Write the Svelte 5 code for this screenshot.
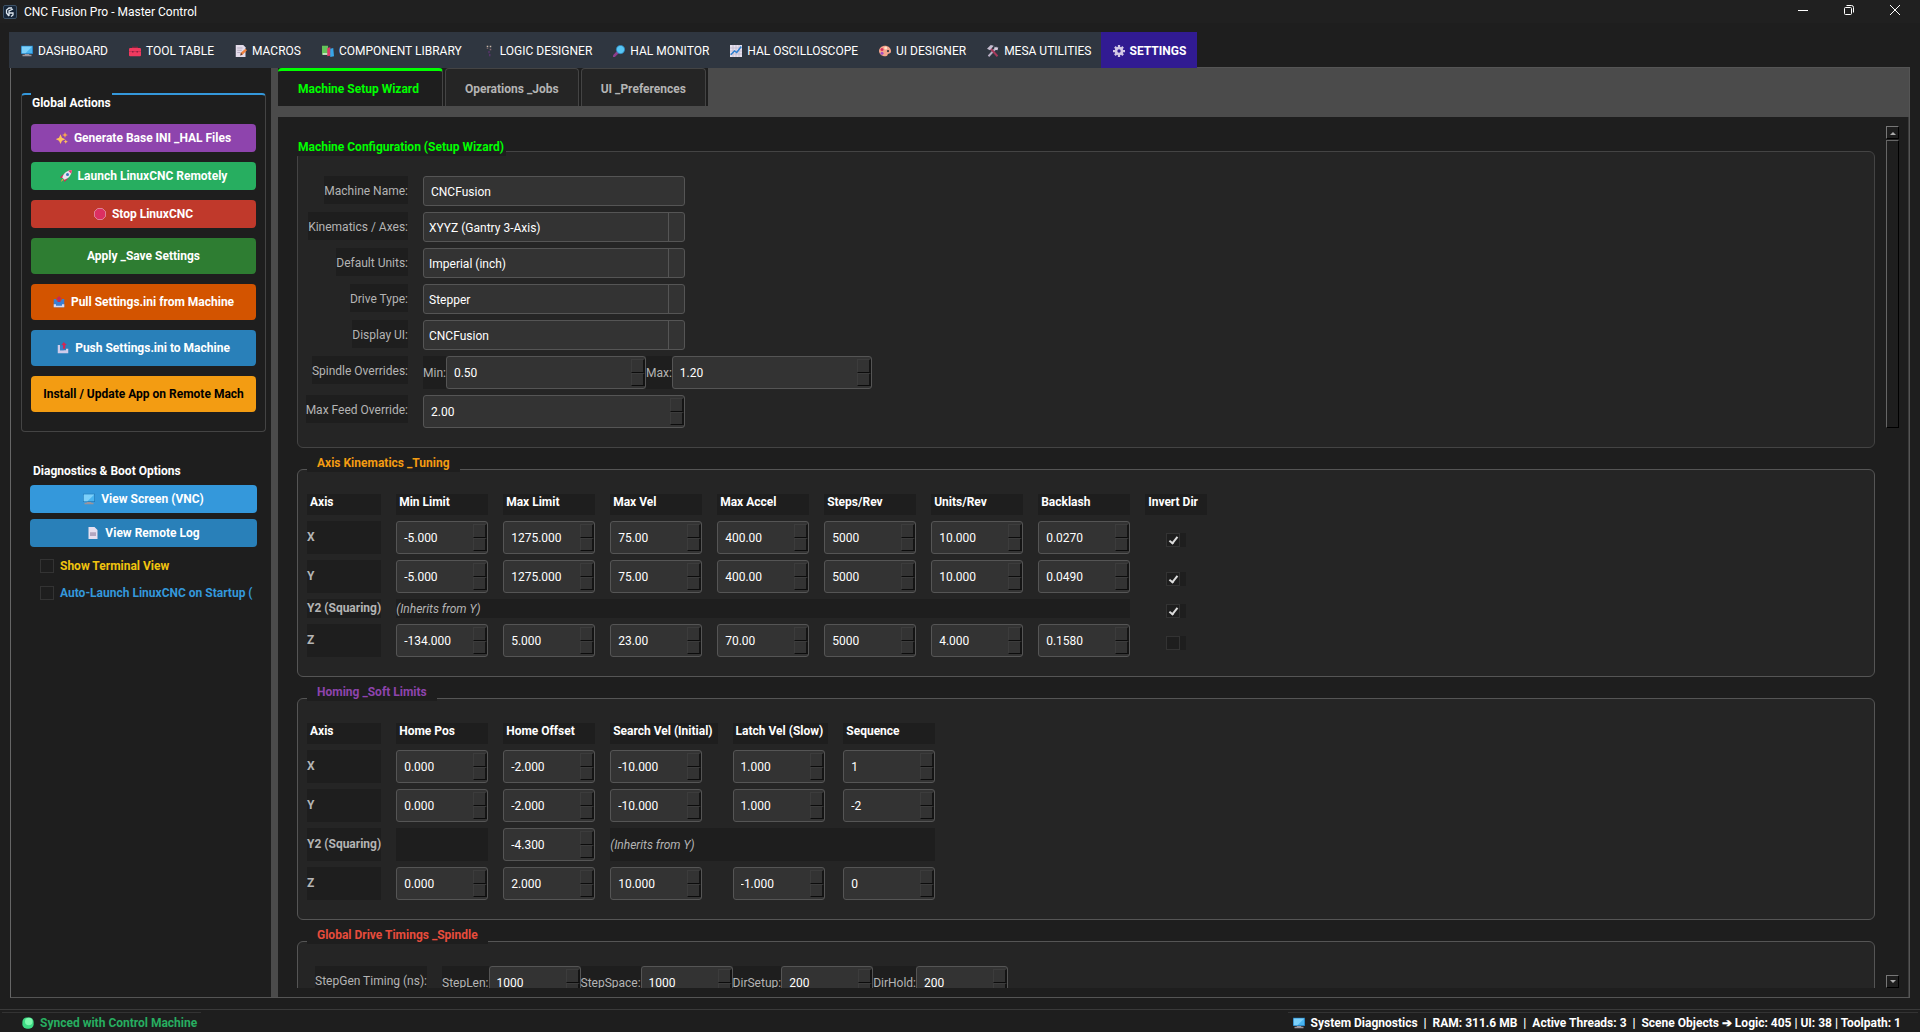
<script lang="ts">
  type Cell = string | null;
  type AxisRow = { axis: string; values: Cell[]; inherits?: number; invert?: boolean };

  const navItems = [
    { icon: 'monitor', label: 'DASHBOARD' },
    { icon: 'toolbox', label: 'TOOL TABLE' },
    { icon: 'memo', label: 'MACROS' },
    { icon: 'books', label: 'COMPONENT LIBRARY' },
    { icon: 'logic', label: 'LOGIC DESIGNER' },
    { icon: 'magnifier', label: 'HAL MONITOR' },
    { icon: 'chart', label: 'HAL OSCILLOSCOPE' },
    { icon: 'palette', label: 'UI DESIGNER' },
    { icon: 'tools', label: 'MESA UTILITIES' },
    { icon: 'gear', label: 'SETTINGS' }
  ];

  const pageTabs = ['Machine Setup Wizard', 'Operations _Jobs', 'UI _Preferences'];

  const actions = [
    { icon: 'sparkles', label: 'Generate Base INI _HAL Files', tone: 'purple' },
    { icon: 'rocket', label: 'Launch LinuxCNC Remotely', tone: 'green' },
    { icon: 'stop', label: 'Stop LinuxCNC', tone: 'red' },
    { icon: '', label: 'Apply _Save Settings', tone: 'forest tall' },
    { icon: 'inbox', label: 'Pull Settings.ini from Machine', tone: 'orange tall' },
    { icon: 'outbox', label: 'Push Settings.ini to Machine', tone: 'blue tall' },
    { icon: '', label: 'Install / Update App on Remote Mach', tone: 'amber tall' }
  ];

  const selects = [
    { id: 'kinematics', label: 'Kinematics / Axes:', value: 'XYYZ (Gantry 3-Axis)' },
    { id: 'units', label: 'Default Units:', value: 'Imperial (inch)' },
    { id: 'drive', label: 'Drive Type:', value: 'Stepper' },
    { id: 'display', label: 'Display UI:', value: 'CNCFusion' }
  ];

  const tuningHeads = ['Min Limit', 'Max Limit', 'Max Vel', 'Max Accel', 'Steps/Rev', 'Units/Rev', 'Backlash'];
  const tuningRows: AxisRow[] = [
    { axis: 'X', values: ['-5.000', '1275.000', '75.00', '400.00', '5000', '10.000', '0.0270'], invert: true },
    { axis: 'Y', values: ['-5.000', '1275.000', '75.00', '400.00', '5000', '10.000', '0.0490'], invert: true },
    { axis: 'Y2 (Squaring)', values: [], inherits: 7, invert: true },
    { axis: 'Z', values: ['-134.000', '5.000', '23.00', '70.00', '5000', '4.000', '0.1580'], invert: false }
  ];

  const homingHeads = ['Home Pos', 'Home Offset', 'Search Vel (Initial)', 'Latch Vel (Slow)', 'Sequence'];
  const homingRows: AxisRow[] = [
    { axis: 'X', values: ['0.000', '-2.000', '-10.000', '1.000', '1'] },
    { axis: 'Y', values: ['0.000', '-2.000', '-10.000', '1.000', '-2'] },
    { axis: 'Y2 (Squaring)', values: [null, '-4.300'], inherits: 3 },
    { axis: 'Z', values: ['0.000', '2.000', '10.000', '-1.000', '0'] }
  ];

  const timings = [
    { id: 'steplen', label: 'StepLen:', value: '1000' },
    { id: 'stepspace', label: 'StepSpace:', value: '1000' },
    { id: 'dirsetup', label: 'DirSetup:', value: '200' },
    { id: 'dirhold', label: 'DirHold:', value: '200' }
  ];

  let activeNav = $state('SETTINGS');
  let activeTab = $state('Machine Setup Wizard');
</script>

{#snippet icon(name: string)}
  <svg class="icon" viewBox="0 0 16 16" aria-hidden="true">
    {#if name === 'monitor'}
      <rect x="0" y="1" width="16" height="11" fill="#2277b5" />
      <path d="M1 2h14v9H1z" fill="#48b4f0" />
      <path d="M1 2h14L6 11H1z" fill="#7cd0fa" />
      <path d="M5 12h6v1h3v2H2v-2h3z" fill="#9a949c" />
    {:else if name === 'toolbox'}
      <path d="M5 5V3h6v2" fill="none" stroke="#9c1f3c" stroke-width="1.5" />
      <rect x="0" y="4" width="16" height="11" rx="1.5" fill="#f03a5f" />
      <rect x="0" y="8" width="16" height="1" fill="#c22c50" />
      <path d="M4 8h2v2H4zM10 8h2v2h-2z" fill="#8d2142" />
    {:else if name === 'memo'}
      <path d="M1 0h10l3 3v13H1z" fill="#e4dcea" />
      <path d="M3 4h7M3 7h6M3 10h4" stroke="#a79bb3" />
      <path d="M7 14l1-4 6-5 2 2-6 6z" fill="#f0803c" />
      <path d="M7 14l1-4 2 3z" fill="#59413c" />
    {:else if name === 'books'}
      <path d="M0 1h8v12H0z" fill="#63c45a" />
      <path d="M7 4l4-1 1 11-5 1z" fill="#e03a68" />
      <path d="M11 5l4-1 1 11-5 1z" fill="#38a7e8" />
      <path d="M1 11h6v2H1z" fill="#dff0dd" />
    {:else if name === 'logic'}
      <path d="M5 1h2v2H5zM9 1h2v2H9z" fill="#c9b8a8" />
      <path d="M5 4h2v1H5zM9 5h2v2H9z" fill="#8a6e72" />
      <path d="M7 8h2v3H7zM8 12h2v3H8z" fill="#563468" />
    {:else if name === 'magnifier'}
      <path d="M6 10L1 15" stroke="#8d3f8d" stroke-width="3.5" stroke-linecap="round" />
      <circle cx="10" cy="6" r="5.5" fill="#58c6f5" stroke="#2b86be" />
    {:else if name === 'chart'}
      <rect x="0" y="0" width="16" height="16" fill="#e6e1ee" />
      <path d="M4 0v16M8 0v16M12 0v16M0 4h16M0 8h16M0 12h16" stroke="#bdb4ca" />
      <path d="M1 13l5-5 3 2 6-8" fill="none" stroke="#2e7fd0" stroke-width="2" />
    {:else if name === 'palette'}
      <path d="M8 1c4 0 8 3 8 7s-3 3-4 4 0 3-4 3-8-3-8-7 4-7 8-7z" fill="#f4a58c" />
      <circle cx="4" cy="6" r="2" fill="#d92f5f" />
      <circle cx="9" cy="4" r="2" fill="#ffe3c7" />
      <circle cx="4" cy="11" r="2" fill="#a14cc2" />
      <circle cx="12" cy="8" r="1.5" fill="#2f3640" />
    {:else if name === 'tools'}
      <path d="M2 15L13 3" stroke="#b9aec4" stroke-width="2.5" />
      <path d="M10 2l2 2 3-1-1 4-4-1z" fill="#d8d0e0" />
      <path d="M5 5l9 10" stroke="#a83a5c" stroke-width="2.5" />
      <path d="M0 5l5-5 4 1-5 6z" fill="#c6bdd0" />
    {:else if name === 'gear'}
      <path d="M8 0v16M0 8h16M2.500 2.500l11 11M13.500 2.500l-11 11" stroke="#d3c8e6" stroke-width="3" />
      <circle cx="8" cy="8" r="4" fill="#311b92" stroke="#d3c8e6" stroke-width="3.500" />
    {:else if name === 'sparkles'}
      <path d="M6 3l2 4.500L12.500 9.500 8 11.500 6 16l-2-4.500L-.5 9.500 4 7.500z" fill="#ffc15c" />
      <path d="M12 0l1 3 3 1-3 1-1 3-1-3-3-1 3-1z" fill="#ffac4a" />
      <path d="M13 10l.9 2 2 .9-2 .9-.9 2-.9-2-2-.9 2-.9z" fill="#ffc15c" />
    {:else if name === 'rocket'}
      <path d="M5 5L0 10l4 1zM11 11l-5 5-1-4z" fill="#d42a5b" />
      <path d="M3 10C5 4 9 1 16 0c-1 7-4 11-10 13z" fill="#e9e3ef" />
      <path d="M11 1l5-1-1 5z" fill="#e8396b" />
      <circle cx="10" cy="6" r="2" fill="#3b78b8" />
      <path d="M3 12l2 1-4 3z" fill="#ff9a3c" />
    {:else if name === 'stop'}
      <path d="M5 0.500h6L15.500 5v6L11 15.500H5L0.500 11V5z" fill="#dc2f62" stroke="#e8a7bd" />
    {:else if name === 'inbox'}
      <path d="M1 4h3l1 2h6l1-2h3v11H1z" fill="#3a7fd2" />
      <path d="M1 11h3v2h8v-2h3v4H1z" fill="#d7d9f2" />
      <path d="M8 0l4 4h-2v4H6V4H4z" fill="#c82a52" />
    {:else if name === 'outbox'}
      <path d="M1 4h3v7h8V9h3v6H1z" fill="#cfcbea" />
      <path d="M4 5h5v6H4z" fill="#3b7cc4" />
      <path d="M9 0l4 4h-2v5H8V4H6z" fill="#cf2755" />
    {:else if name === 'page'}
      <path d="M2 0h8l4 4v12H2z" fill="#e6dff0" />
      <path d="M4 7h8v5H4z" fill="#b3a6c0" />
    {:else if name === 'dot'}
      <rect x="0.500" y="0.500" width="15" height="15" rx="6" fill="#3ddc84" />
      <circle cx="9" cy="6" r="5" fill="#7dfaae" />
    {/if}
  </svg>
{/snippet}

{#snippet spin(value: string, label: string, id?: string)}
  <span class="spin">
    <input {id} type="text" inputmode="decimal" {value} aria-label={id ? undefined : label} />
    <span class="steps">
      <button type="button" tabindex="-1" aria-label="Increase {label}"></button>
      <button type="button" tabindex="-1" aria-label="Decrease {label}"></button>
    </span>
  </span>
{/snippet}

{#snippet axisTable(heads: string[], rows: AxisRow[], invert: boolean)}
  <table>
    <thead>
      <tr>
        <th scope="col">Axis</th>
        {#each heads as head (head)}
          <th scope="col">{head}</th>
        {/each}
        {#if invert}<th scope="col" class="invert-head">Invert Dir</th>{/if}
      </tr>
    </thead>
    <tbody>
      {#each rows as row (row.axis)}
        <tr>
          <th scope="row">{row.axis}</th>
          {#each row.values as value, i}
            {#if value === null}
              <td class="blank"></td>
            {:else}
              <td>{@render spin(value, `${row.axis} ${heads[i]}`)}</td>
            {/if}
          {/each}
          {#if row.inherits}
            <td class="blank note" colspan={row.inherits}>(Inherits from Y)</td>
          {/if}
          {#if invert}
            <td class="invert">
              <span class="check-bg">
                <input type="checkbox" checked={row.invert} aria-label="Invert {row.axis}" />
              </span>
            </td>
          {/if}
        </tr>
      {/each}
    </tbody>
  </table>
{/snippet}

<div class="window">
  <header class="titlebar">
    <svg class="app-icon" viewBox="0 0 14 14" aria-hidden="true">
      <rect x="0.500" y="0.500" width="13" height="13" rx="1.500" fill="#152538" stroke="#3c5268" />
      <path d="M9 3H6L3.500 5v3L6 11M6 11V6l4-2M6 8h4v2L8 11.500" fill="none" stroke="#dfe8f0" stroke-width="1.300" />
    </svg>
    <h1>CNC Fusion Pro - Master Control</h1>
    <div class="controls">
      <button type="button" aria-label="Minimize">
        <svg viewBox="0 0 12 12"><path d="M1 6.500h10" /></svg>
      </button>
      <button type="button" aria-label="Restore">
        <svg viewBox="0 0 12 12">
          <rect x="1.500" y="3.500" width="7" height="7" rx="1" />
          <path d="M3.500 1.500h5a2 2 0 0 1 2 2v5" />
        </svg>
      </button>
      <button type="button" aria-label="Close">
        <svg viewBox="0 0 12 12"><path d="M1 1l10 10M11 1L1 11" /></svg>
      </button>
    </div>
  </header>

  <nav>
    {#each navItems as item (item.label)}
      <button type="button" class:active={activeNav === item.label} onclick={() => (activeNav = item.label)}>
        {@render icon(item.icon)}{item.label}
      </button>
    {/each}
  </nav>

  <main>
    <aside>
      <fieldset class="global">
        <legend>Global Actions</legend>
        <div class="global-body">
          {#each actions as action (action.label)}
            <button type="button" class="action {action.tone}">
              {#if action.icon}{@render icon(action.icon)}{/if}
              <span>{action.label}</span>
            </button>
          {/each}
        </div>
      </fieldset>

      <section class="diag">
        <h2>Diagnostics &amp; Boot Options</h2>
        <button type="button" class="action sky">{@render icon('monitor')}<span>View Screen (VNC)</span></button>
        <button type="button" class="action blue">{@render icon('page')}<span>View Remote Log</span></button>
        <label class="option yellow"><input type="checkbox" />Show Terminal View</label>
        <label class="option azure"><input type="checkbox" />Auto-Launch LinuxCNC on Startup (</label>
      </section>
    </aside>

    <div class="workspace">
      <div class="tabbar">
        <div class="tabs" role="tablist">
          {#each pageTabs as tab (tab)}
            <button
              type="button"
              role="tab"
              aria-selected={activeTab === tab}
              class:active={activeTab === tab}
              onclick={() => (activeTab = tab)}
            >
              {tab}
            </button>
          {/each}
        </div>
      </div>

      <div class="page">
        <div class="viewport">
          <fieldset class="group flush">
            <legend class="lime">Machine Configuration (Setup Wizard)</legend>
            <div class="body form">
              <label for="machine">Machine Name:</label>
              <input id="machine" class="field" type="text" value="CNCFusion" />
              {#each selects as item (item.id)}
                <label for={item.id}>{item.label}</label>
                <select id={item.id} class="field">
                  <option>{item.value}</option>
                </select>
              {/each}
              <span class="label">Spindle Overrides:</span>
              <div class="inline wide">
                <label for="smin">Min:</label>
                {@render spin('0.50', 'spindle minimum', 'smin')}
                <label for="smax">Max:</label>
                {@render spin('1.20', 'spindle maximum', 'smax')}
              </div>
              <label for="feed">Max Feed Override:</label>
              <div class="full">{@render spin('2.00', 'feed override', 'feed')}</div>
            </div>
          </fieldset>

          <fieldset class="group">
            <legend class="amber-text">Axis Kinematics _Tuning</legend>
            <div class="body">
              {@render axisTable(tuningHeads, tuningRows, true)}
            </div>
          </fieldset>

          <fieldset class="group">
            <legend class="violet">Homing _Soft Limits</legend>
            <div class="body">
              {@render axisTable(homingHeads, homingRows, false)}
            </div>
          </fieldset>

          <fieldset class="group">
            <legend class="coral">Global Drive Timings _Spindle</legend>
            <div class="body form timing">
              <span class="label">StepGen Timing (ns):</span>
              <div class="inline">
                {#each timings as item (item.id)}
                  <label for={item.id}>{item.label}</label>
                  {@render spin(item.value, item.id, item.id)}
                {/each}
              </div>
            </div>
          </fieldset>
        </div>

        <div class="scrollbar">
          <button type="button" aria-label="Scroll up"><svg viewBox="0 0 6 4"><path d="M0 4l3-3 3 3z" /></svg></button>
          <div class="track"><div class="thumb"></div></div>
          <button type="button" aria-label="Scroll down"><svg viewBox="0 0 6 4"><path d="M0 0l3 3 3-3z" /></svg></button>
        </div>
      </div>
    </div>
  </main>

  <footer>
    <p class="sync">{@render icon('dot')}Synced with Control Machine</p>
    <p class="stats">
      {@render icon('monitor')}
      <span>System Diagnostics&nbsp; |&nbsp; RAM: 311.6 MB&nbsp; |&nbsp; Active Threads: 3&nbsp; |&nbsp; Scene Objects ➔ Logic: 405 | UI: 38 | Toolpath: 1</span>
    </p>
  </footer>
</div>

<style>
  :global(body) {
    background: #1e1e1e;
  }

  .window {
    height: 100vh;
    display: flex;
    flex-direction: column;
    overflow: hidden;
    background: #1e1e1e;
    color: #fff;
    font: 12px/16px Roboto, 'Noto Sans', sans-serif;
  }

  button,
  input,
  select {
    font: inherit;
    color: inherit;
    box-sizing: border-box;
    margin: 0;
  }

  button {
    border: 0;
    padding: 0;
    background: none;
    white-space: nowrap;
  }

  h1,
  h2,
  p,
  fieldset,
  legend {
    margin: 0;
    padding: 0;
    border: 0;
    min-width: 0;
    font-size: 12px;
  }

  .icon {
    width: 12px;
    height: 12px;
    flex: none;
  }

  /* title bar */
  .titlebar {
    display: flex;
    align-items: center;
    height: 23px;
    flex: none;
    margin-bottom: 9px;
    padding: 0 2px 0 3px;
    background: #202020;
  }

  .app-icon {
    width: 14px;
    height: 14px;
    margin-right: 7px;
  }

  h1 {
    font-weight: 400;
  }

  .controls {
    display: flex;
    margin-left: auto;
  }

  .controls button {
    width: 46px;
    height: 20px;
  }

  .controls svg {
    width: 12px;
    height: 12px;
    fill: none;
    stroke: #fff;
  }

  /* main navigation */
  nav {
    display: flex;
    align-self: flex-start;
    flex: none;
    position: relative;
    z-index: 1;
    margin: 0 0 -1px 9px;
    background: #2f3640;
  }

  nav button {
    display: flex;
    align-items: center;
    gap: 5px;
    height: 36px;
    padding: 1px 9px 0 12px;
  }

  nav button.active {
    padding-right: 11px;
    background: #311b92;
    font-weight: 700;
  }

  main {
    flex: 1;
    min-height: 0;
    display: flex;
    margin: 0 10px 11px;
    border: 1px solid #555;
    border-left-color: #666;
  }

  /* left column */
  aside {
    width: 245px;
    flex: none;
    padding: 18px 5px 0 10px;
    border-right: 7px solid #4b4b4b;
  }

  .global legend {
    position: relative;
    margin: 0 0 -18px 10px;
    padding: 9px 1px 0;
    background: #1e1e1e;
    font-weight: 700;
  }

  .global-body {
    display: grid;
    gap: 10px;
    padding: 29px 9px 19px;
    border: 1px solid #444;
    border-top: 2px solid #3498db;
    border-radius: 4px;
  }

  .action {
    display: flex;
    align-items: center;
    justify-content: center;
    gap: 6px;
    min-width: 0;
    height: 28px;
    padding: 0 10px;
    border-radius: 4px;
    font-weight: 700;
  }

  .tall {
    height: 36px;
  }

  .purple {
    background: #8e44ad;
  }

  .green {
    background: #27ae60;
  }

  .red {
    background: #c0392b;
  }

  .forest {
    background: #2e7d32;
  }

  .orange {
    background: #d35400;
  }

  .blue {
    background: #2980b9;
  }

  .amber {
    background: #f39c12;
    color: #000;
  }

  .sky {
    background: #3498db;
  }

  .diag {
    display: grid;
    gap: 6px;
    margin: 32px 9px 0;
  }

  .diag h2 {
    padding-left: 3px;
    line-height: 15px;
  }

  .option {
    display: flex;
    align-items: center;
    gap: 6px;
    height: 21px;
    margin-left: 10px;
    font-weight: 700;
    white-space: nowrap;
  }

  .option:nth-of-type(1) {
    margin-top: 2px;
  }

  .yellow {
    color: #f1c40f;
  }

  .azure {
    color: #3498db;
  }

  input[type='checkbox'] {
    appearance: none;
    display: grid;
    place-items: center;
    flex: none;
    width: 14px;
    height: 14px;
    border: 1px solid #333;
    background: #1e1e1e;
  }

  input[type='checkbox']:checked::after {
    content: '';
    width: 3px;
    height: 7px;
    margin-bottom: 2px;
    border: solid #ddd;
    border-width: 0 2px 2px 0;
    transform: rotate(38deg);
  }

  /* right side */
  .workspace {
    flex: 1;
    min-width: 0;
    display: flex;
    flex-direction: column;
  }

  .tabbar {
    display: flex;
    flex: none;
    height: 49px;
    background: #4b4b4b;
  }

  .tabs {
    display: flex;
    gap: 2px;
    height: 38px;
    padding-right: 2px;
    background: #1e1e1e;
  }

  .tabs button {
    padding: 2px 19px 0;
    border: 1px solid #444;
    border-bottom: 0;
    border-radius: 4px 4px 0 0;
    background: #252525;
    color: #b4b4b4;
    font-weight: 700;
  }

  .tabs button.active {
    padding: 0 23px 0 20px;
    border-top: 3px solid #0f0;
    border-left: 0;
    background: #1e1e1e;
    color: #0f0;
  }

  .page {
    flex: 1;
    min-height: 0;
    display: flex;
    gap: 11px;
    padding: 9px 9px 9px 19px;
    border-right: 1px solid #3a3a3a;
  }

  .viewport {
    flex: 1;
    min-width: 0;
    overflow: hidden;
    padding-top: 12px;
  }

  .group {
    margin-bottom: 6px;
  }

  .group legend {
    position: relative;
    margin: 0 0 -3px 10px;
    padding: 0 10px;
    background: #1e1e1e;
    font-weight: 700;
    line-height: 18px;
  }

  .group.flush legend {
    margin: 0 0 -5px;
    padding: 0 2px 0 1px;
  }

  .lime {
    color: #0f0;
  }

  .amber-text {
    color: #f39c12;
  }

  .violet {
    color: #8e44ad;
  }

  .coral {
    color: #e74c3c;
  }

  .body {
    padding: 18px 9px 13px;
    border: 1px solid #555;
    border-radius: 6px;
    background: #252525;
  }

  .flush .body {
    border-color: #444;
  }

  .body.form {
    display: grid;
    grid-template-columns: 101px auto;
    justify-content: start;
    gap: 6px 15px;
    padding: 24px 9px 19px;
    color: #b4b4b4;
  }

  .body.timing {
    grid-template-columns: 111px auto;
    padding-left: 18px;
  }

  .form > label,
  .form > .label {
    justify-self: end;
    height: 28px;
    background: #1e1e1e;
    line-height: 30px;
    white-space: nowrap;
  }

  .field {
    width: 262px;
    height: 30px;
    border: 1px solid #555;
    border-radius: 3px;
    background: #333;
    color: #fff;
    padding: 2px 7px 0;
  }

  select.field {
    appearance: none;
    padding-left: 5px;
    background: linear-gradient(#555, #555) no-repeat right 15px top / 1px 100% #333;
  }

  .inline {
    display: flex;
  }

  .inline label {
    height: 33px;
    background: #1e1e1e;
    line-height: 34px;
  }

  .spin {
    box-sizing: border-box;
    display: flex;
    width: 92px;
    height: 33px;
    padding: 2px 0 2px 7px;
    border: 1px solid #555;
    border-radius: 3px;
    background: #333;
  }

  .wide .spin {
    width: 200px;
  }

  .full .spin {
    width: 262px;
  }

  .spin input {
    flex: 1;
    min-width: 0;
    padding: 1px 0 0;
    border: 0;
    background: none;
    color: #fff;
  }

  .steps {
    display: flex;
    flex-direction: column;
    width: 14px;
  }

  .steps button {
    flex: 1;
    border: solid #3c3c3c;
    border-width: 1px 2px 1px 1px;
    border-right-color: #141414;
    border-bottom-color: #0c0c0c;
  }

  table {
    border-spacing: 15px 6px;
    margin-left: -15px;
  }

  th,
  td {
    padding: 0;
    text-align: left;
    white-space: nowrap;
  }

  thead th {
    height: 21px;
    padding: 0 5px 0 3px;
    background: #1e1e1e;
    line-height: 16px;
    vertical-align: top;
  }

  .invert-head {
    min-width: 54px;
  }

  tbody th {
    background: #1e1e1e;
    color: #b4b4b4;
    line-height: 19px;
  }

  .blank {
    background: #1e1e1e;
  }

  .note {
    color: #b4b4b4;
    font-style: italic;
  }

  .invert {
    padding-top: 5px;
  }

  .check-bg {
    display: block;
    width: 20px;
    margin: 0 auto;
    background: #1e1e1e;
  }

  /* scrollbar */
  .scrollbar {
    display: flex;
    flex-direction: column;
    width: 13px;
  }

  .scrollbar button {
    display: grid;
    place-items: center;
    width: 13px;
    height: 13px;
    border: 1px solid #777;
    border-right: 1px solid #000;
    border-bottom: 1px solid #000;
  }

  .scrollbar svg {
    width: 6px;
    height: 4px;
    fill: #aaa;
  }

  .track {
    flex: 1;
    padding-top: 1px;
  }

  .thumb {
    box-sizing: border-box;
    height: 34.5%;
    border: 1px solid #666;
    border-right: 1px solid #000;
    border-bottom: 1px solid #000;
  }

  /* status bar */
  footer {
    display: flex;
    justify-content: space-between;
    flex: none;
    padding: 2px 2px 0;
    border-top: 1px solid #3a3a3a;
  }

  footer p {
    display: flex;
    align-items: center;
    height: 20px;
    padding-top: 1px;
    box-sizing: border-box;
    border-top: 1px solid #333;
    font-weight: 700;
  }

  .sync {
    gap: 6px;
    padding: 0 4px 0 20px;
    color: #27ae60;
  }

  .stats {
    gap: 6px;
    padding: 0 17px 0 5px;
  }
</style>
